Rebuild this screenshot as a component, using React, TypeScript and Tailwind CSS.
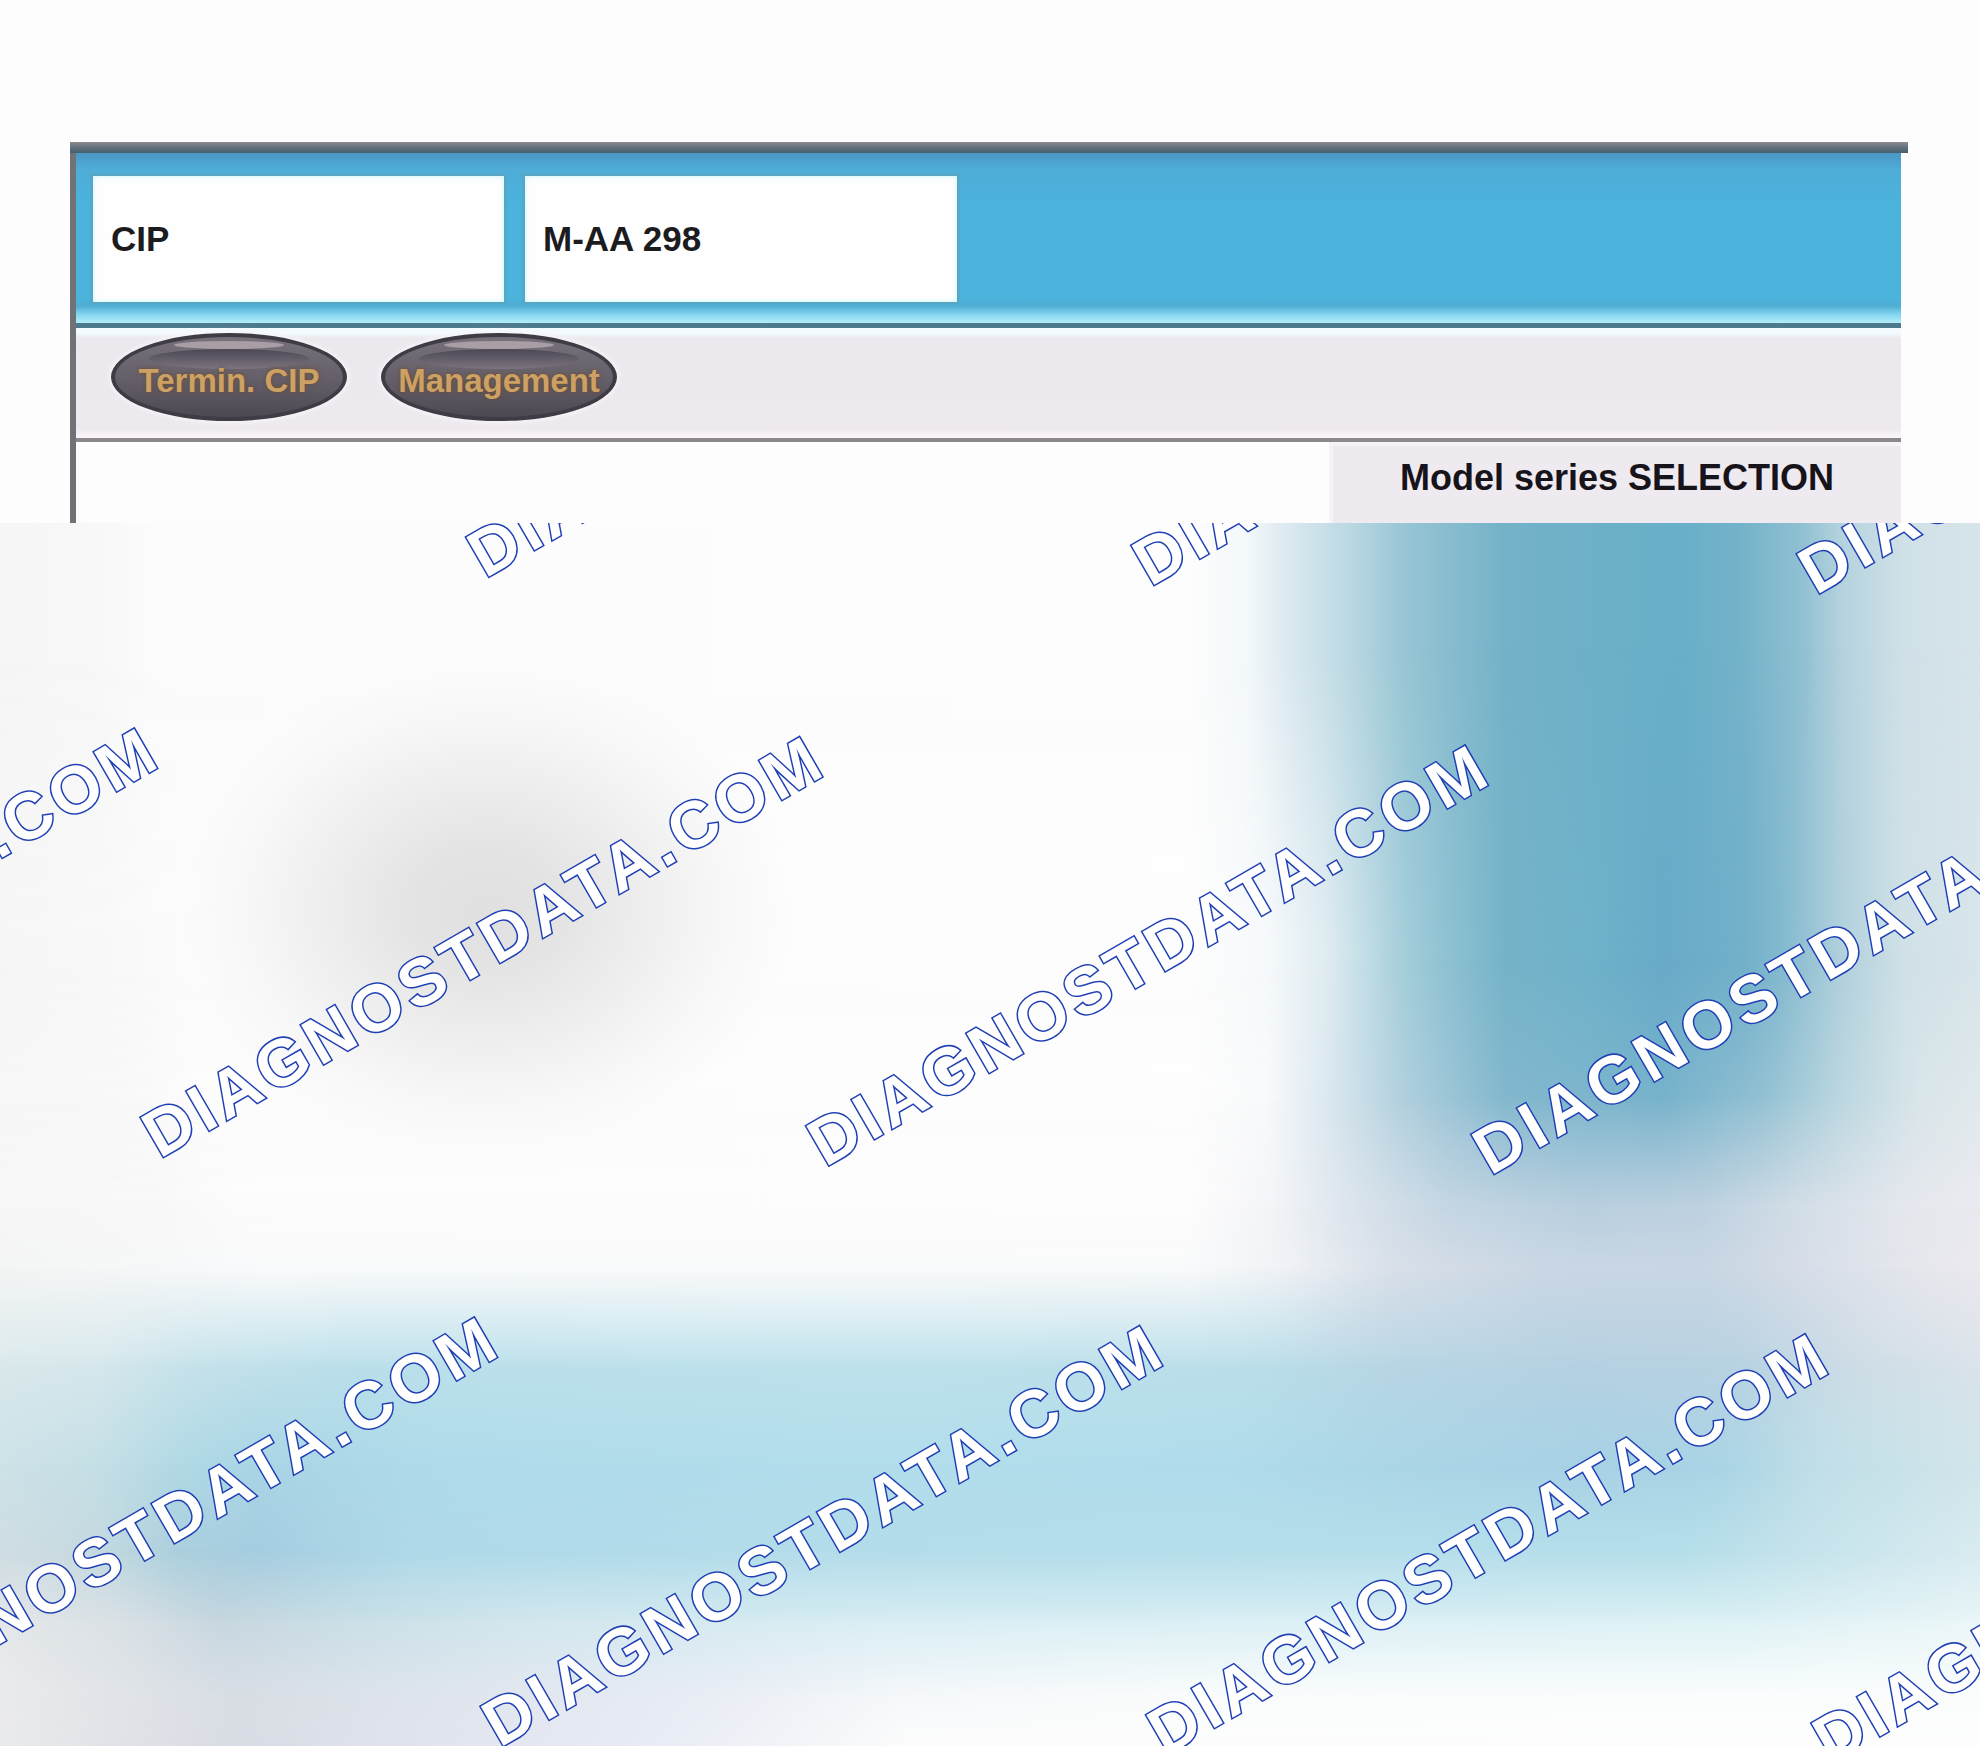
import React from "react";

const WATERMARK = "DIAGNOSTDATA.COM";
const ROWS = [
  { offset: false, marks: ["a", "b"] },
  { offset: true, marks: ["a", "b"] },
  { offset: false, marks: ["a", "b", "c"] },
  { offset: true, marks: ["a", "b"] },
  { offset: false, marks: ["a", "b"] },
  { offset: true, marks: ["a", "b"] },
];

function FieldBox({ label, className }: { label: string; className: string }) {
  return (
    <div
      className={`flex h-[126px] items-center bg-[#fefefe] pl-[18px] shadow-[inset_0_0_5px_#bff4fb,0_0_2px_2px_#5aa5bd] ${className}`}
    >
      <span className="text-[35px] leading-10 font-bold text-[#1c1c1f]">{label}</span>
    </div>
  );
}

function OvalButton({ label }: { label: string }) {
  return (
    <button
      type="button"
      className="relative flex h-22 w-[236px] items-center justify-center rounded-[50%] border-[4px] border-[#3f3c45] bg-linear-to-b from-[#77717b] via-[#66606a] to-[#4c4953] shadow-[0_0_4px_2px_#f8f5f8]"
    >
      <span className="absolute top-1 h-2 w-[110px] rounded-[50%] bg-[#a99da6]" />
      <span className="absolute top-3 h-5 w-[160px] rounded-[50%] bg-linear-to-b from-[#4b4853] to-[#7d7580]" />
      <span className="relative pt-2 text-[33px] leading-10 font-bold whitespace-pre text-[#cda063] [text-shadow:0_0_4px_#6b4a2c]">
        {label}
      </span>
    </button>
  );
}

function Haze() {
  return (
    <div className="absolute inset-0 bg-[linear-gradient(to_right,#f6f6f6_0%,#f8f8f8_5%,#fcfcfc_8%,#fdfdfd_60%,#f3f8fa_63%,#dce9f0_65%,#bcd9e3_68%,#97c5d4_71%,#74b2c8_76%,#6cb0c8_81%,#68afc9_85%,#74b3ca_88%,#90c0d2_91%,#b4d2de_93%,#cfe0e7_96%,#d7e5ea_100%)]">
      <div className="absolute inset-0 bg-[linear-gradient(to_right,#f6f6f6_0%,#f8f8f8_5%,#fcfcfc_10%,#fdfdfd_60%,#f6f9fb_64%,#dfecf1_67%,#a3cdda_71%,#8fc2d2_73%,#76b3c8_76%,#6fb2ca_80%,#68aac8_84%,#72b0ca_88%,#83b9ce_90%,#b0d0dc_93%,#cfe0e6_96%,#d8e5ea_100%)] mask-[linear-gradient(to_bottom,transparent_10%,black_35%)]" />
      <div className="absolute inset-0 bg-[linear-gradient(to_right,#f7f7f7_0%,#f8f8f8_6%,#fcfcfc_10%,#fdfdfd_60%,#f8fafb_64%,#dbe8ef_67%,#b0cfdd_71%,#84b8ce_76%,#78b3cb_84%,#94c1d3_89%,#bcd7e1_93%,#dae6ea_97%,#e1e9ec_100%)] mask-[linear-gradient(to_bottom,transparent_36%,black_48%)]" />
      <div className="absolute inset-0 bg-[linear-gradient(to_right,#f7f7f7_0%,#f8f8f8_8%,#fcfcfc_12%,#fdfdfd_60%,#f4f5f8_64%,#dde5ed_68%,#c5d6e3_73%,#b9cfdf_80%,#bed1e0_86%,#d3dee7_91%,#e4e7ed_96%,#e9eaef_100%)] mask-[linear-gradient(to_bottom,transparent_47%,black_56%)]" />
      <div className="absolute inset-0 bg-[linear-gradient(to_right,#f3f4f4_0%,#f6f7f8_8%,#f9fafb_13%,#f9fafb_60%,#eff1f5_65%,#d9e0e9_70%,#cad7e4_78%,#c8d6e3_86%,#d9dfe9_92%,#e6e7ed_97%,#eae9ee_100%)] mask-[linear-gradient(to_bottom,transparent_56%,black_61%)]" />
      <div className="absolute inset-0 bg-[linear-gradient(to_right,#dbe9ec_0%,#d7e8ec_5%,#c7e3eb_10%,#bce0eb_18%,#bfe2ec_45%,#bcdfea_63%,#b9d6e5_70%,#b6d1e2_80%,#b9d2e2_88%,#cfdde6_94%,#dbe3ea_100%)] mask-[linear-gradient(to_bottom,transparent_61%,black_69%)]" />
      <div className="absolute inset-0 bg-[linear-gradient(to_right,#cde2e7_0%,#c5dfe6_5%,#b1d9e5_9%,#a9d5e5_13%,#afdbea_22%,#b2ddeb_45%,#b0dceb_62%,#abd6e6_70%,#a7d1e4_80%,#aad4e5_87%,#c1dfe8_92%,#d1e5eb_100%)] mask-[linear-gradient(to_bottom,transparent_68%,black_77%)]" />
      <div className="absolute inset-0 bg-[linear-gradient(to_right,#cfdde2_0%,#c4d9e0_5%,#abcfdd_9%,#a5cde0_13%,#afd9e9_21%,#b3dcea_40%,#b5deeb_65%,#b5deea_85%,#c2e2eb_90%,#d8ebf0_100%)] mask-[linear-gradient(to_bottom,transparent_77%,black_84%)]" />
      <div className="absolute inset-0 bg-[linear-gradient(to_right,#e4e7e9_0%,#d9e1e5_6%,#c6d6df_11%,#c9dfe7_18%,#d2e7ee_27%,#d7edf3_45%,#d9eff4_70%,#dbf0f4_88%,#e9f5f7_100%)] mask-[linear-gradient(to_bottom,transparent_84%,black_90%)]" />
      <div className="absolute inset-0 bg-[linear-gradient(to_right,#eaebec_0%,#e1e4e8_6%,#d8dee5_12%,#dfe5ed_22%,#e8ecf4_35%,#f4f7fa_45%,#fafcfc_60%,#fbfdfd_100%)] mask-[linear-gradient(to_bottom,transparent_89%,black_96%)]" />
      <div className="absolute inset-0 bg-[linear-gradient(to_right,#e9eaec_0%,#e1e2e7_6%,#d8dbe3_12%,#e0e3ec_20%,#e7eaf4_32%,#f2f4f8_40%,#fcfcfc_46%,#fdfdfd_100%)] mask-[linear-gradient(to_bottom,transparent_95%,black_100%)]" />
      <div className="absolute top-[11%] left-[9%] h-[41%] w-[31%] bg-[radial-gradient(closest-side,#e0e0e0_0%,#e4e4e4_25%,#efefef_55%,#f8f8f8_80%,transparent_100%)]" />
    </div>
  );
}

function Watermarks() {
  return (
    <div
      aria-hidden="true"
      className="absolute top-[580px] left-[-533px] w-[3600px] origin-top-left -rotate-30 font-['Liberation_Sans',Arial,sans-serif] text-[66px] leading-[64px] font-bold tracking-[5px] text-white [paint-order:stroke] [-webkit-text-stroke:3px_#1f3fb4]"
    >
      {ROWS.map((row, index) => (
        <div key={index} className={row.offset ? "flex h-[340px] pl-[572px]" : "flex h-[340px]"}>
          {row.marks.map((mark) => (
            <span key={mark} className="w-[1144px] shrink-0">
              {WATERMARK}
            </span>
          ))}
        </div>
      ))}
    </div>
  );
}

export default function App() {
  return (
    <div className="flex min-h-screen flex-col overflow-hidden bg-[#fdfdfd] pt-[142px] font-['Liberation_Sans',Arial,sans-serif]">
      <div className="mr-[72px] ml-[70px] h-[11px] bg-linear-to-b from-[#8c8c90] via-[#62707c] to-[#46606f]" />
      <div className="mr-[79px] ml-[70px] flex flex-col border-l-[6px] border-[#707275]">
        <header className="flex h-[175px] gap-[21px] border-b-[5px] border-[#4d7a8c] bg-[linear-gradient(to_bottom,#4a97c4_0%,#4fadd8_10%,#4bb3dc_30%,#4bb3dc_86%,#4fadd3_90%,#85d5f0_95%,#b4eefa_100%)] pt-[23px] pl-[17px]">
          <FieldBox label="CIP" className="w-[411px]" />
          <FieldBox label="M-AA 298" className="w-[432px]" />
        </header>
        <nav className="flex h-[114px] gap-[34px] border-b-4 border-[#8c898d] bg-[linear-gradient(to_bottom,#f3fbff_0%,#f3fbff_5%,#ede8ee_9%,#eee9ee_92%,#faf4fa_98%)] pt-[5px] pl-[35px]">
          <OvalButton label="Termin. CIP" />
          <OvalButton label="Management" />
        </nav>
        <div className="flex h-[81px] justify-end">
          <section className="w-[572px] border-t-4 border-l-4 border-[#f6f3f6] bg-[#eeeaef] pt-[12px] text-center">
            <h1 className="text-[36px] leading-10 font-bold text-[#17131b]">Model series SELECTION</h1>
          </section>
        </div>
      </div>
      <main className="relative min-h-[1223px] flex-1 overflow-hidden">
        <Haze />
        <Watermarks />
      </main>
    </div>
  );
}
